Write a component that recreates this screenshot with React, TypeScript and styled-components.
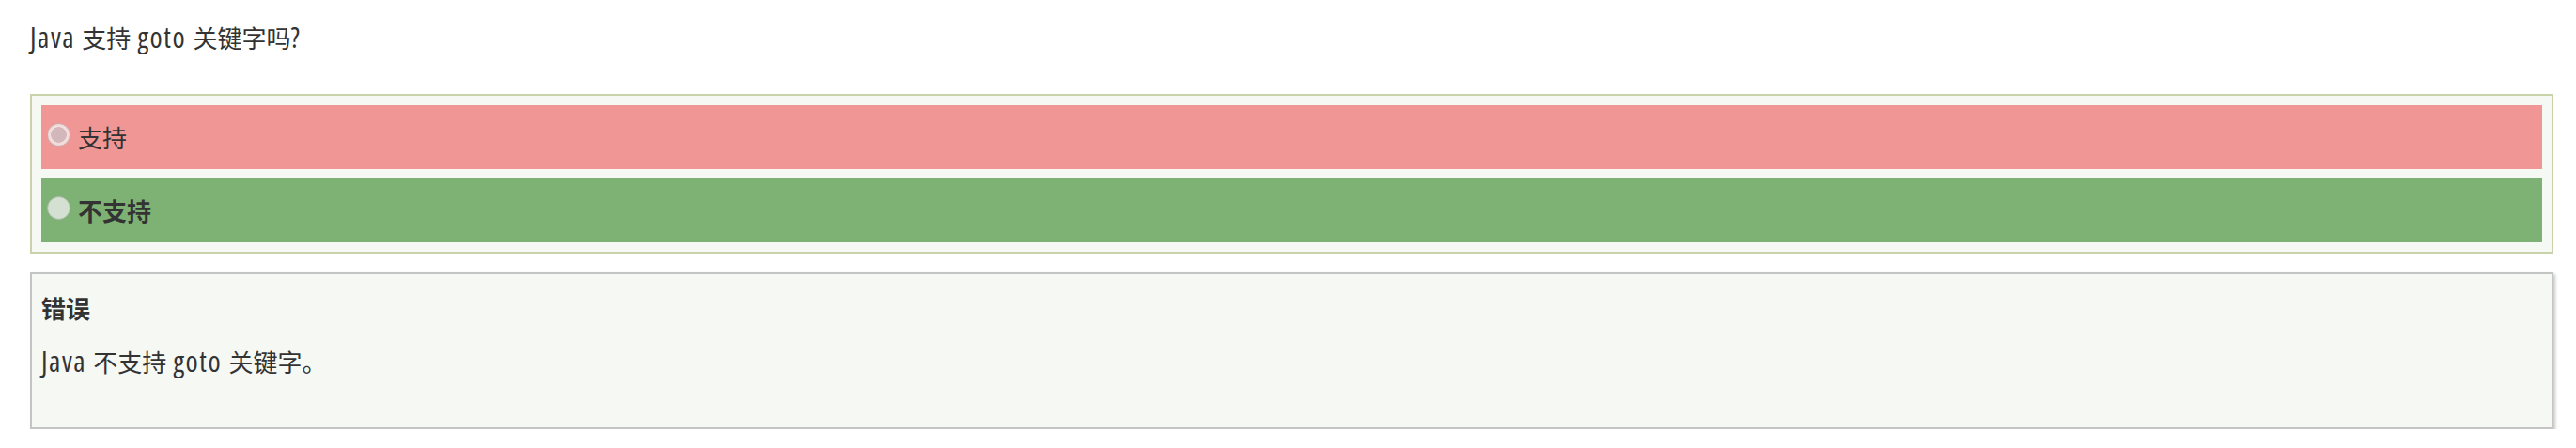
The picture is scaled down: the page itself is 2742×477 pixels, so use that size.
import React from "react";
import styled, { createGlobalStyle } from "styled-components";

const GlobalStyle = createGlobalStyle`
  html, body {
    margin: 0;
    padding: 0;
    background: #ffffff;
  }
  body {
    font-family: "Liberation Sans", "Noto Sans CJK SC", sans-serif;
    color: #333333;
  }
`;

const Page = styled.div`
  padding: 23px 24px 0 32px;
  font-size: 26px;
  line-height: 39px;
`;

const Latin = styled.span`
  font-family: "Open Sans", "Liberation Sans", sans-serif;
  font-stretch: 87.5%;
  font-weight: 400;
  font-size: 30px;
  letter-spacing: 1.5px;
  line-height: 1;
`;

const Question = styled.p`
  margin: 0 0 38px 0;
  font-size: 26px;
  line-height: 39px;
`;

const OptionsBox = styled.div`
  border: 2px solid #c9d3a9;
  background: #f6f8f3;
  padding: 10px;
  display: flex;
  flex-direction: column;
  gap: 10px;
`;

const OptionRow = styled.label<{ $tone: "wrong" | "right" }>`
  box-sizing: border-box;
  display: flex;
  align-items: center;
  gap: 8px;
  height: 68px;
  padding: 5px 0 0 6px;
  background: ${(p) => (p.$tone === "wrong" ? "#f09694" : "#7eb274")};
`;

const Radio = styled.span<{ $tone: "wrong" | "right" }>`
  flex: none;
  box-sizing: border-box;
  width: 25px;
  height: 25px;
  margin-top: -10px;
  border-radius: 50%;
  border: 1px solid ${(p) => (p.$tone === "wrong" ? "#c9acad" : "#a9b8a6")};
  background: ${(p) =>
    p.$tone === "wrong"
      ? "radial-gradient(circle, #d2b8ba 0 8px, #f3dcdc 8.5px)"
      : "#d4e0d1"};
`;

const OptionText = styled.span<{ $bold?: boolean }>`
  font-size: 26px;
  line-height: 39px;
  font-weight: ${(p) => (p.$bold ? 700 : 400)};
  color: #333333;
`;

const Feedback = styled.div`
  margin-top: 20px;
  border: 2px solid #c4c4c4;
  background: #f6f8f3;
  box-shadow: 2px 2px 3px rgba(0, 0, 0, 0.22);
  padding: 19px 10px 48px 10px;
`;

const FeedbackTitle = styled.div`
  font-size: 26px;
  line-height: 39px;
  font-weight: 700;
  color: #333333;
`;

const FeedbackBody = styled.p`
  margin: 18px 0 0 0;
  font-size: 26px;
  line-height: 39px;
  color: #333333;
`;

export default function App() {
  return (
    <>
      <GlobalStyle />
      <Page>
        <Question>
          <Latin>Java</Latin> 支持 <Latin>goto</Latin> 关键字吗<Latin>?</Latin>
        </Question>
        <OptionsBox>
          <OptionRow $tone="wrong">
            <Radio $tone="wrong" />
            <OptionText>支持</OptionText>
          </OptionRow>
          <OptionRow $tone="right">
            <Radio $tone="right" />
            <OptionText $bold>不支持</OptionText>
          </OptionRow>
        </OptionsBox>
        <Feedback>
          <FeedbackTitle>错误</FeedbackTitle>
          <FeedbackBody>
            <Latin>Java</Latin> 不支持 <Latin>goto</Latin> 关键字。
          </FeedbackBody>
        </Feedback>
      </Page>
    </>
  );
}
